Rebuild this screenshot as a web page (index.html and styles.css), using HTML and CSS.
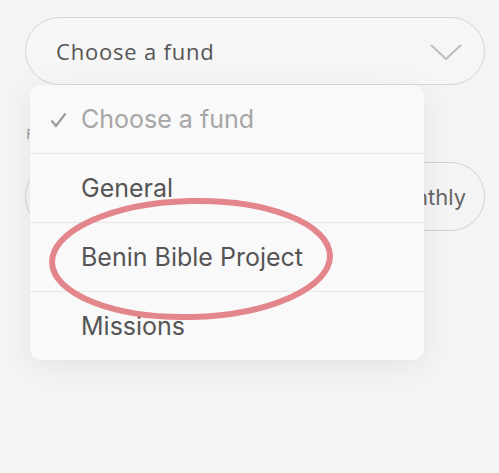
FILE: index.html
```html
<!DOCTYPE html>
<html lang="en">
<head>
    <meta charset="UTF-8">
    <meta name="viewport" content="width=device-width, initial-scale=1.0">
    <title>Give</title>
    <link rel="stylesheet" href="styles.css">
</head>
<body>
  <div class="form">
    <div class="select">
      <span>Choose a fund</span>
      <svg class="chev" width="32" height="16" viewBox="0 0 32 16">
        <path d="M1 1 L16 15 L31 1" fill="none" stroke="#bdbdbd" stroke-width="2"/>
      </svg>
    </div>
    <div class="label">Frequency</div>
    <div class="freq">
      <span>One time</span>
      <span>Monthly</span>
    </div>
  </div>

  <!-- fund picker menu -->
  <div class="menu">
    <div class="item picked">
      <svg class="check" width="17" height="16" viewBox="0 0 17 16">
        <path d="M1.5 8.5 L6 14 L15.5 1.5" fill="none" stroke="#9a9a9a" stroke-width="2.2"/>
      </svg>
      Choose a fund
    </div>
    <div class="item">General</div>
    <div class="item">Benin Bible Project</div>
    <div class="item">Missions</div>
  </div>

  <svg class="circle" width="300" height="130" viewBox="0 0 300 130">
    <ellipse cx="142" cy="64" rx="139" ry="58" fill="none" stroke="#e3868b" stroke-width="6" transform="rotate(-1.5 142 64)"/>
  </svg>
</body>
</html>
```

FILE: styles.css
```css
body{
    margin: 0;
    background-color: #f4f4f4;
    font-family: "Open Sans", sans-serif;
    height: 473px;
    overflow: hidden;
    position: relative;
}

.form{
    padding: 17px 14px 0 25px;
}

.select{
    height: 66px;
    border: 1px solid #d6d6d6;
    border-radius: 34px;
    display: flex;
    align-items: center;
    justify-content: space-between;
    padding: 0 22px 0 30px;
    font-size: 22px;
    letter-spacing: 0.8px;
    color: #555;
    background-color: #f6f6f6;
}
.chev{
    margin-top: 1px;
}

.label{
    font-size: 15px;
    color: #999;
    margin: 38px 0 0 1px;
}

.freq{
    margin-top: 19px;
    height: 67px;
    border: 1px solid #d2d2d2;
    border-radius: 34px;
    display: flex;
    align-items: center;
    justify-content: space-between;
    padding: 0 18px 0 30px;
    font-family: "Inter", sans-serif;
    font-size: 22px;
    color: #666;
}

.menu{
    position: absolute;
    left: 30px;
    top: 85px;
    width: 394px;
    background-color: #faf9fa;
    border-radius: 12px;
    box-shadow: 0 6px 30px rgba(0,0,0,0.07);
    font-family: "Inter", sans-serif;
}
.item{
    height: 68px;
    display: flex;
    align-items: center;
    padding-left: 51px;
    font-size: 25px;
    color: #555;
    border-top: 1px solid #e6e6e6;
}
.item:first-child{
    border-top: none;
}
.picked{
    color: #a6a6a6;
    position: relative;
}
.check{
    position: absolute;
    left: 20px;
    top: 27px;
}

.circle{
    position: absolute;
    left: 49px;
    top: 195px;
}
```
